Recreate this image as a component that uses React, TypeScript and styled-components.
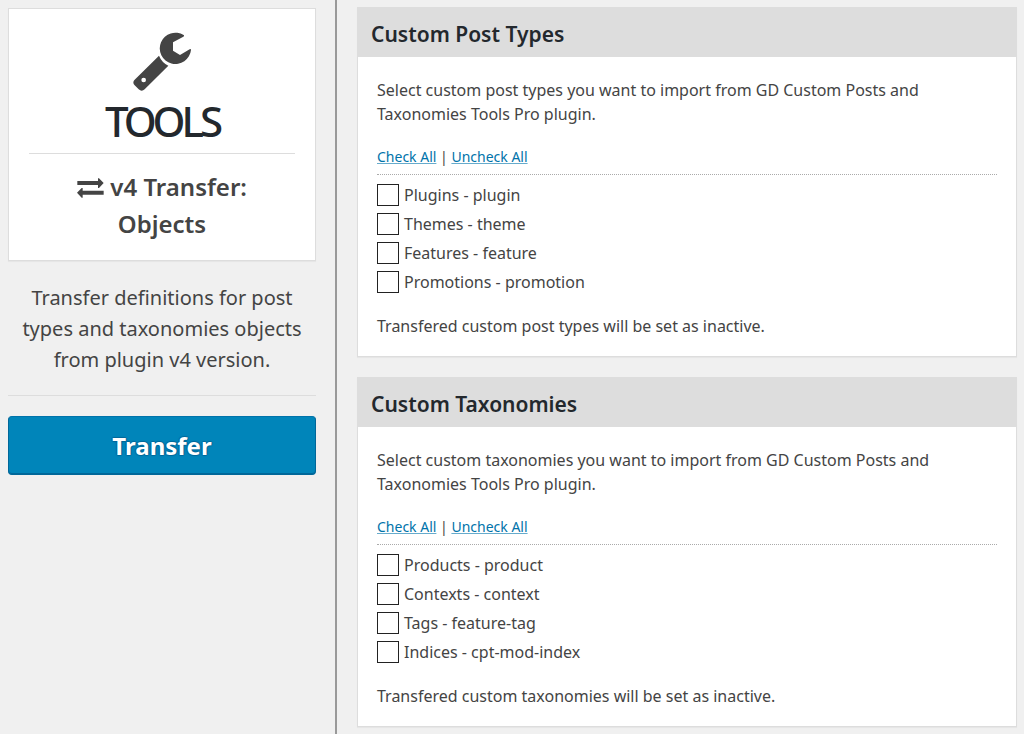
import React, { useState } from "react";
import styled, { createGlobalStyle } from "styled-components";

const GlobalStyle = createGlobalStyle`
  *, *::before, *::after { box-sizing: border-box; }
  body {
    margin: 0;
    background: #f0f0f0;
    color: #444;
    font-family: "Segoe UI", "Noto Sans", "Open Sans", sans-serif;
    font-size: 16px;
    line-height: 24px;
  }
  h1, h2, h3, p, ul { margin: 0; padding: 0; font-weight: 400; }
`;

const Page = styled.div`
  display: flex;
  min-height: 100vh;
`;

const Sidebar = styled.aside`
  flex: 0 0 337px;
  padding: 8px 19px 8px 8px;
  border-right: 2px solid #999;
  text-align: center;
`;

const Card = styled.div`
  display: flex;
  flex-direction: column;
  align-items: center;
  padding: 23px 20px 18px;
  background: #fff;
  border: 1px solid #ddd;
  box-shadow: 0 1px 1px rgba(0, 0, 0, 0.04);
`;

const CardTitle = styled.h1`
  width: 100%;
  margin-top: 3px;
  padding-bottom: 6px;
  border-bottom: 1px solid #ddd;
  color: #23282d;
  font-size: 42px;
  font-weight: 500;
  line-height: 52px;
  letter-spacing: -4px;
`;

const CardSubtitle = styled.h2`
  max-width: 200px;
  margin-top: 14px;
  font-size: 24px;
  font-weight: 600;
  line-height: 37px;

  svg { vertical-align: -2px; }
`;

const Description = styled.p`
  padding: 21px 8px 20px;
  border-bottom: 1px solid #ddd;
  font-size: 20px;
  line-height: 31px;
`;

const PrimaryButton = styled.button`
  display: block;
  width: 100%;
  height: 59px;
  margin-top: 20px;
  padding: 0;
  background: #0085ba;
  border: 1px solid;
  border-color: #0073aa #006799 #006799;
  border-radius: 4px;
  box-shadow: 0 -1px 0 #006799 inset;
  color: #fff;
  font: 700 24px/32px "Segoe UI", "Noto Sans", "Open Sans", sans-serif;
  text-shadow: 0 -1px 1px #006799, 1px 0 1px #006799, 0 1px 1px #006799, -1px 0 1px #006799;
  cursor: pointer;
`;

const Main = styled.main`
  flex: 1;
  min-width: 0;
  display: flex;
  flex-direction: column;
  gap: 20px;
  padding: 7px 7px 7px 20px;
`;

const Panel = styled.section`
  background: #fff;
  border: 1px solid #ddd;
  box-shadow: 0 1px 1px rgba(0, 0, 0, 0.04);
`;

const PanelTitle = styled.h3`
  padding: 12px 13px 9px;
  background: #ddd;
  color: #23282d;
  font-size: 21px;
  font-weight: 600;
  line-height: 28px;
`;

const PanelBody = styled.div`
  padding: 21px 19px 18px;
`;

const Intro = styled.p`
  max-width: 570px;
`;

const Actions = styled.div`
  margin-top: 19px;
  padding-bottom: 5px;
  border-bottom: 1px dotted #aaa;
  font-size: 14px;
`;

const ActionLink = styled.a`
  color: #0073aa;
  text-decoration: underline;
  text-decoration-color: #66abcc;
`;

const List = styled.ul`
  display: grid;
  gap: 5px;
  margin-top: 8px;
  list-style: none;
`;

const Option = styled.label`
  display: flex;
  align-items: center;
  gap: 5px;
  height: 24px;
  width: fit-content;
`;

const Checkbox = styled.input`
  appearance: none;
  width: 22px;
  height: 22px;
  margin: 0;
  background: #fff;
  border: 1px solid #222;

  &:checked { box-shadow: inset 0 0 0 4px #fff; background: #0085ba; }
`;

const Note = styled.p`
  margin-top: 20px;
`;

const WrenchIcon = () => (
  <svg width="60" height="60" viewBox="396 96 180 180" fill="#444" aria-hidden="true">
    <path d="M551 105Q554 107 550 110L519 127V152L540 165L569 148Q573 146 573 150A47 47 0 1 1 551 105Z" />
    <path
      fillRule="evenodd"
      d="M477 167Q485 187 505 197L434 268Q425 276 416 268L404 256Q396 247 404 239ZM438 240A7 7 0 1 0 424 240A7 7 0 1 0 438 240Z"
    />
  </svg>
);

const ExchangeIcon = () => (
  <svg width="27" height="20" viewBox="228 114 81 60" fill="#444" aria-hidden="true">
    <path d="M229 123H291V115H294L308 129L294 144H291V135H229Z" />
    <path d="M308 152H245V144H242L228 158L242 173H245V164H308Z" />
  </svg>
);

interface GroupProps {
  title: string;
  intro: string;
  items: string[];
  note: string;
}

function TransferGroup({ title, intro, items, note }: GroupProps) {
  const [checked, setChecked] = useState<string[]>([]);

  const setAll = (next: string[]) => (event: React.MouseEvent) => {
    event.preventDefault();
    setChecked(next);
  };

  const toggle = (item: string) =>
    setChecked(checked.includes(item) ? checked.filter((c) => c !== item) : [...checked, item]);

  return (
    <Panel>
      <PanelTitle>{title}</PanelTitle>
      <PanelBody>
        <Intro>{intro}</Intro>
        <Actions>
          <ActionLink href="#check" onClick={setAll(items)}>Check All</ActionLink>
          {" | "}
          <ActionLink href="#uncheck" onClick={setAll([])}>Uncheck All</ActionLink>
        </Actions>
        <List>
          {items.map((item) => (
            <li key={item}>
              <Option>
                <Checkbox type="checkbox" checked={checked.includes(item)} onChange={() => toggle(item)} />
                {item}
              </Option>
            </li>
          ))}
        </List>
        <Note>{note}</Note>
      </PanelBody>
    </Panel>
  );
}

export default function App() {
  return (
    <>
      <GlobalStyle />
      <Page>
        <Sidebar>
          <Card>
            <WrenchIcon />
            <CardTitle>TOOLS</CardTitle>
            <CardSubtitle>
              <ExchangeIcon /> v4 Transfer: Objects
            </CardSubtitle>
          </Card>
          <Description>
            Transfer definitions for post types and taxonomies objects from plugin v4 version.
          </Description>
          <PrimaryButton type="button">Transfer</PrimaryButton>
        </Sidebar>
        <Main>
          <TransferGroup
            title="Custom Post Types"
            intro="Select custom post types you want to import from GD Custom Posts and Taxonomies Tools Pro plugin."
            items={["Plugins - plugin", "Themes - theme", "Features - feature", "Promotions - promotion"]}
            note="Transfered custom post types will be set as inactive."
          />
          <TransferGroup
            title="Custom Taxonomies"
            intro="Select custom taxonomies you want to import from GD Custom Posts and Taxonomies Tools Pro plugin."
            items={["Products - product", "Contexts - context", "Tags - feature-tag", "Indices - cpt-mod-index"]}
            note="Transfered custom taxonomies will be set as inactive."
          />
        </Main>
      </Page>
    </>
  );
}
